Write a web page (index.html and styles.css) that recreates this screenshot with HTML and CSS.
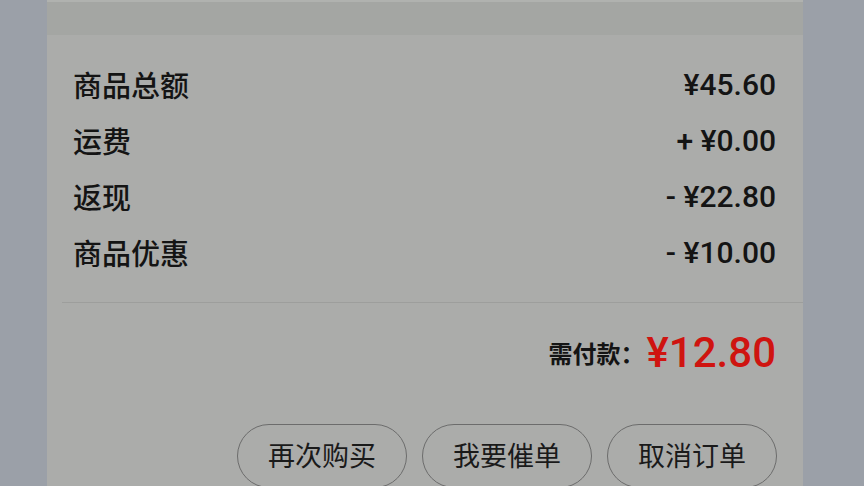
FILE: index.html
```html
<!DOCTYPE html>
<html lang="zh-CN">
<head>
  <meta charset="UTF-8" />
  <meta name="viewport" content="width=device-width, initial-scale=1.0"/>
  <title>订单详情</title>
  <link rel="stylesheet" href="styles.css">
</head>
<body>
  <div class="card">
    <div class="top-strip"></div>

    <div class="rows">
      <div class="row"><span class="label">商品总额</span><span class="value">¥45.60</span></div>
      <div class="row"><span class="label">运费</span><span class="value">+ ¥0.00</span></div>
      <div class="row"><span class="label">返现</span><span class="value">- ¥22.80</span></div>
      <div class="row"><span class="label">商品优惠</span><span class="value">- ¥10.00</span></div>
    </div>

    <div class="divider"></div>

    <div class="total">
      <span class="total-label">需付款：</span><span class="total-value">¥12.80</span>
    </div>

    <div class="actions">
      <button class="btn">再次购买</button>
      <button class="btn">我要催单</button>
      <button class="btn">取消订单</button>
    </div>
  </div>
</body>
</html>
```

FILE: styles.css
```css
body {
  margin: 0;
  background-color: #9ba0a8;
  font-family: Roboto, "Noto Sans CJK SC", sans-serif;
  color: #141414;
  height: 486px;
  overflow: hidden;
}
.card {
  margin-left: 47px;
  width: 756px;
  height: 486px;
  background-color: #abacaa;
}
.top-strip {
  height: 35px;
  background-color: #a4a6a3;
  border-top: 2px solid #b0b2af;
  box-sizing: border-box;
}
.rows {
  padding: 21px 27px 0 26px;
}
.row {
  display: flex;
  justify-content: space-between;
  align-items: center;
  height: 56px;
}
.label {
  font-family: "Noto Sans CJK SC", sans-serif;
  font-size: 29px;
  font-weight: 500;
}
.value {
  font-size: 30px;
  font-weight: 500;
  white-space: pre;
}
.divider {
  margin: 22px 0 0 15px;
  height: 1px;
  background-color: #9d9e9c;
}
.total {
  display: flex;
  justify-content: flex-end;
  align-items: center;
  height: 50px;
  padding: 24px 27px 0 0;
}
.total-label {
  font-family: "Noto Sans CJK SC", sans-serif;
  font-size: 24px;
  font-weight: 700;
  margin-right: 2px;
}
.total-value {
  color: #cf1410;
  font-size: 42px;
  font-weight: 500;
}
.actions {
  display: flex;
  justify-content: flex-end;
  gap: 15px;
  padding: 47px 26px 0 0;
}
.btn {
  width: 170px;
  height: 64px;
  border: 1.5px solid #6c6c6c;
  border-radius: 32px;
  background: transparent;
  font-family: "Noto Sans CJK SC", sans-serif;
  font-size: 27px;
  color: #1a1a1a;
  padding: 0 0 4px 0;
}
```
